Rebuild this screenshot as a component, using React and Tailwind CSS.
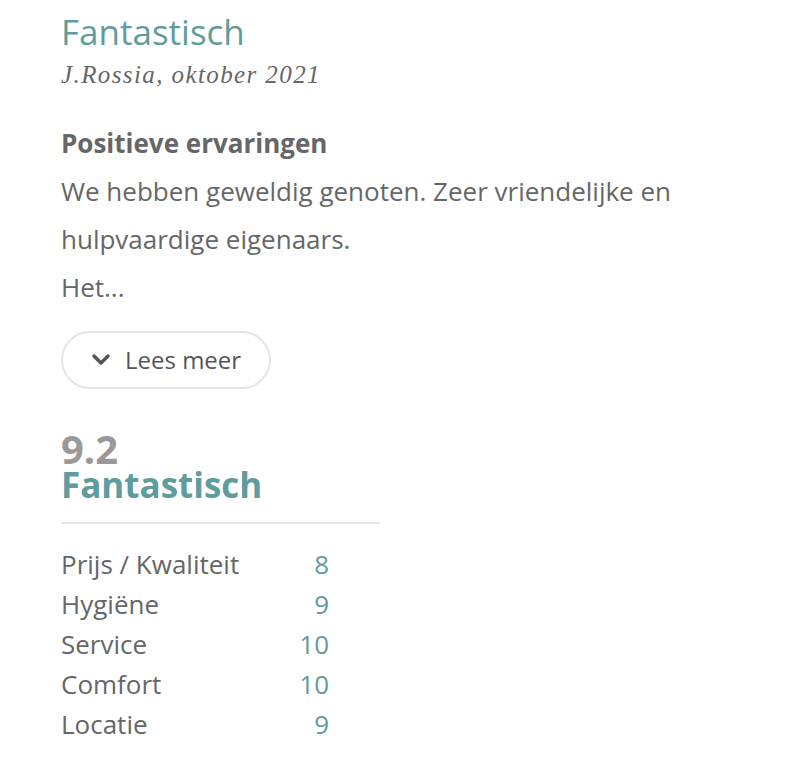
const scores = [
  { label: "Prijs / Kwaliteit", value: 8 },
  { label: "Hygiëne", value: 9 },
  { label: "Service", value: 10 },
  { label: "Comfort", value: 10 },
  { label: "Locatie", value: 9 },
]

const App = () => {
  return (
    <div className="min-h-screen bg-white pl-[61px] pt-[10px] font-['Open_Sans',sans-serif] text-[#666]">
      <h2 className="text-[35px] leading-[44px] font-normal text-[#5f9c9d]">Fantastisch</h2>
      <p className="mt-[5px] font-['Liberation_Serif',serif] italic text-[25px] leading-[32px] tracking-[1.4px] text-[#666]">
        J.Rossia, oktober 2021
      </p>

      <div className="mt-[28px] w-[660px]">
        <p className="font-bold text-[26px] leading-[48px]">Positieve ervaringen</p>
        <p className="text-[26px] leading-[48px]">
          We hebben geweldig genoten. Zeer vriendelijke en hulpvaardige eigenaars.
        </p>
        <p className="text-[26px] leading-[48px]">Het...</p>
      </div>

      <button className="mt-[20px] flex h-[58px] w-[210px] items-center gap-[14px] rounded-full border-2 border-[#e2e6e6] pl-[28px] text-[24px] text-[#555]">
        <svg width="20" height="14" viewBox="0 0 20 14" fill="none" stroke="#555" strokeWidth="3.5" strokeLinecap="round" strokeLinejoin="round">
          <path d="M3 3l7 7 7-7" />
        </svg>
        Lees meer
      </button>

      <div className="mt-[43px] w-[319px] border-b-2 border-[#e2e6e6] pb-[18px]">
        <p className="text-[40px] font-bold leading-[34px] text-[#999]">9.2</p>
        <p className="text-[35px] font-bold leading-[38px] text-[#5f9c9d]">Fantastisch</p>
      </div>

      <div className="mt-[20px] w-[268px]">
        {scores.map((s) => (
          <div key={s.label} className="flex justify-between text-[26px] leading-[40px]">
            <span>{s.label}</span>
            <span className="text-[#5f9c9d]">{s.value}</span>
          </div>
        ))}
      </div>
    </div>
  )
}

export default App
